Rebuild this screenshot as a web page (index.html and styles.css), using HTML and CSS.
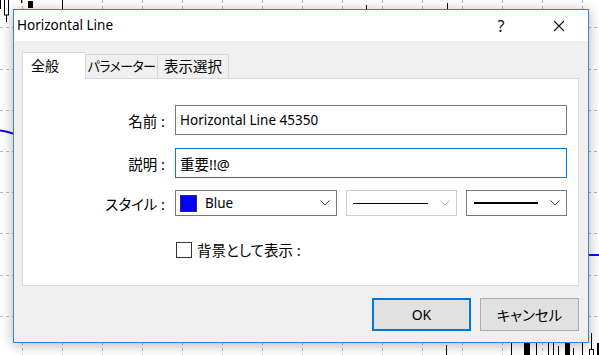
FILE: index.html
```html
<!DOCTYPE html>
<html lang="ja">
<head>
    <meta charset="UTF-8">
    <meta name="viewport" content="width=device-width, initial-scale=1.0">
    <title>Horizontal Line</title>
    <link rel="stylesheet" href="styles.css">
</head>
<body>
    <!-- Chart behind the dialog -->
    <svg class="chart" width="599" height="355" viewBox="0 0 599 355">
        <g stroke="#b8b8b8" stroke-width="1" stroke-dasharray="3 3">
            <line x1="0" y1="27.5" x2="599" y2="27.5"/>
            <line x1="0" y1="69.5" x2="599" y2="69.5"/>
            <line x1="0" y1="110.5" x2="599" y2="110.5"/>
            <line x1="0" y1="151.5" x2="599" y2="151.5"/>
            <line x1="0" y1="192.5" x2="599" y2="192.5"/>
            <line x1="0" y1="233.5" x2="599" y2="233.5"/>
            <line x1="0" y1="275.5" x2="599" y2="275.5"/>
            <line x1="0" y1="316.5" x2="599" y2="316.5"/>
        </g>
        <g stroke="#b8b8b8" stroke-width="1" stroke-dasharray="3 3">
            <line x1="22.5" y1="0" x2="22.5" y2="355"/>
            <line x1="62.5" y1="0" x2="62.5" y2="355"/>
            <line x1="102.5" y1="0" x2="102.5" y2="355"/>
            <line x1="142.5" y1="0" x2="142.5" y2="355"/>
            <line x1="182.5" y1="0" x2="182.5" y2="355"/>
            <line x1="222.5" y1="0" x2="222.5" y2="355"/>
            <line x1="262.5" y1="0" x2="262.5" y2="355"/>
            <line x1="302.5" y1="0" x2="302.5" y2="355"/>
            <line x1="342.5" y1="0" x2="342.5" y2="355"/>
            <line x1="382.5" y1="0" x2="382.5" y2="355"/>
            <line x1="422.5" y1="0" x2="422.5" y2="355"/>
            <line x1="462.5" y1="0" x2="462.5" y2="355"/>
            <line x1="502.5" y1="0" x2="502.5" y2="355"/>
            <line x1="542.5" y1="0" x2="542.5" y2="355"/>
            <line x1="582.5" y1="0" x2="582.5" y2="355"/>
        </g>
        <!-- candles -->
        <g stroke="#000" stroke-width="1" fill="#fff">
            <line x1="0.5" y1="0" x2="0.5" y2="9"/>
            <rect x="4.5" y="-1" width="4" height="16"/>
            <line x1="6.5" y1="15" x2="6.5" y2="22"/>
            <line x1="21.5" y1="0" x2="21.5" y2="3"/>
            <line x1="62.5" y1="0" x2="62.5" y2="9"/>
            <line x1="366.5" y1="5" x2="366.5" y2="9"/>
            <line x1="447.5" y1="3" x2="447.5" y2="9"/>
            <line x1="446.5" y1="345" x2="446.5" y2="355"/>
            <line x1="511.5" y1="343" x2="511.5" y2="355"/>
            <line x1="536.5" y1="343" x2="536.5" y2="355"/>
            <line x1="548.5" y1="343" x2="548.5" y2="355"/>
            <line x1="553.5" y1="343" x2="553.5" y2="355"/>
            <line x1="558.5" y1="346" x2="558.5" y2="355"/>
            <line x1="573.5" y1="348" x2="573.5" y2="355"/>
            <line x1="582.5" y1="343" x2="582.5" y2="355"/>
            <line x1="591.5" y1="333" x2="591.5" y2="349"/>
            <rect x="589.5" y="349.5" width="4" height="6"/>
        </g>
        <g fill="#000">
            <rect x="28" y="1" width="5" height="7"/>
            <rect x="524" y="343" width="6" height="12"/>
            <rect x="565" y="343" width="5" height="12"/>
            <rect x="597" y="343" width="2" height="12"/>
        </g>
        <!-- indicator line -->
        <g stroke="#1010d8" stroke-width="2" fill="none">
            <polyline points="0,130.5 6,131.5 13,133.5"/>
            <polyline points="588,255 599,255"/>
        </g>
    </svg>

    <!-- Dialog -->
    <div class="dialog">
        <div class="titlebar">
            <span class="title latin">Horizontal Line</span>
            <div class="title-buttons">
                <span class="title-btn">?</span>
                <span class="title-btn">
                    <svg width="12" height="12" viewBox="0 0 12 12">
                        <path d="M1 1 L11 11 M11 1 L1 11" stroke="#111" stroke-width="1.1" fill="none"/>
                    </svg>
                </span>
            </div>
        </div>

        <div class="dialog-body">
            <div class="tabs">
                <div class="tab active">全般</div>
                <div class="tab tab-params">パラメーター</div>
                <div class="tab tab-view">表示選択</div>
            </div>

            <div class="panel">
                <label class="label">名前 :</label>
                <div class="input latin">Horizontal Line 45350</div>

                <label class="label">説明 :</label>
                <div class="input focused">重要!!@</div>

                <label class="label row-style">スタイル :</label>
                <div class="style-row row-style">
                    <div class="select color-select">
                        <span class="swatch"></span>
                        <span class="select-text latin">Blue</span>
                        <svg class="chevron" width="10" height="6" viewBox="0 0 10 6">
                            <path d="M0.5 0.5 L5 5 L9.5 0.5" stroke="#444" fill="none"/>
                        </svg>
                    </div>
                    <div class="select line-select disabled">
                        <span class="line-sample thin"></span>
                        <svg class="chevron" width="10" height="6" viewBox="0 0 10 6">
                            <path d="M0.5 0.5 L5 5 L9.5 0.5" stroke="#b5b5b5" fill="none"/>
                        </svg>
                    </div>
                    <div class="select width-select">
                        <span class="line-sample thick"></span>
                        <svg class="chevron" width="10" height="6" viewBox="0 0 10 6">
                            <path d="M0.5 0.5 L5 5 L9.5 0.5" stroke="#444" fill="none"/>
                        </svg>
                    </div>
                </div>

                <div class="check-row">
                    <span class="checkbox"></span>
                    <span>背景として表示 :</span>
                </div>
            </div>

            <div class="buttons">
                <button class="btn default latin">OK</button>
                <button class="btn">キャンセル</button>
            </div>
        </div>
    </div>
</body>
</html>
```

FILE: styles.css
```css
/* Basic Reset */
body {
    margin: 0;
    width: 599px;
    height: 355px;
    overflow: hidden;
    position: relative;
    background-color: #fff;
    font-family: "Noto Sans", "Noto Sans CJK JP", sans-serif;
    font-size: 14.5px;
    color: #000;
    font-feature-settings: "palt";
}

/* Latin-only text runs a little narrower */
.latin {
    font-size: 13.5px;
}

.chart {
    position: absolute;
    left: 0;
    top: 0;
    display: block;
}

/* Dialog window */
.dialog {
    position: absolute;
    left: 13px;
    top: 9px;
    width: 576px;
    height: 334px;
    box-sizing: border-box;
    border: 1px solid #3b80d2;
    background-color: #f0f0f0;
    box-shadow: 0 2px 12px rgba(0, 0, 0, 0.3);
    display: flex;
    flex-direction: column;
}

.titlebar {
    height: 31px;
    background-color: #fff;
    display: flex;
    align-items: center;
    padding-left: 3px;
}

.title {
    line-height: 1;
}

.title-buttons {
    margin-left: auto;
    margin-right: 6px;
    display: flex;
    gap: 12px;
}

.title-btn {
    width: 46px;
    height: 31px;
    display: flex;
    align-items: center;
    justify-content: center;
    font-size: 16px;
    color: #111;
}

.dialog-body {
    flex: 1;
    padding: 11px 9px 11px 8px;
    display: flex;
    flex-direction: column;
}

/* Tabs */
.tabs {
    height: 26px;
    display: flex;
    align-items: flex-end;
    position: relative;
    z-index: 1;
    font-size: 14px;
}

.tab {
    box-sizing: border-box;
    height: 24px;
    display: flex;
    align-items: center;
    justify-content: center;
    white-space: nowrap;
    background-color: #f0f0f0;
    border: 1px solid #d9d9d9;
    border-left: none;
    border-bottom: none;
    line-height: 1;
}

.tab.active {
    width: 63px;
    height: 27px;
    margin-bottom: -1px;
    background-color: #fff;
    border-left: 1px solid #d9d9d9;
    border-right: none;
    justify-content: flex-start;
    padding-left: 8px;
}

.tab-params {
    width: 73px;
    border-left: 1px solid #d9d9d9;
    font-size: 13px;
    letter-spacing: -0.6px;
}

.tab-view {
    width: 71px;
    font-size: 14.5px;
}

/* Panel */
.panel {
    box-sizing: border-box;
    height: 208px;
    background-color: #fff;
    border: 1px solid #d9d9d9;
    padding: 26px 11px 0 0;
    display: grid;
    grid-template-columns: 143px 1fr;
    column-gap: 9px;
    row-gap: 13px;
    align-content: start;
}

.label {
    display: flex;
    align-items: center;
    justify-content: flex-end;
    padding-right: 1px;
}

.input {
    box-sizing: border-box;
    height: 30px;
    border: 1px solid #7a7a7a;
    padding: 0 4px;
    display: flex;
    align-items: center;
}

.input.focused {
    border-color: #0078d7;
}

.row-style {
    margin-top: -1px;
}

.style-row {
    display: flex;
    gap: 9px;
}

.select {
    box-sizing: border-box;
    height: 26px;
    border: 1px solid #7a7a7a;
    background-color: #fff;
    display: flex;
    align-items: center;
    padding: 0 6px 0 4px;
}

.select.disabled {
    border-color: #cccccc;
}

.chevron {
    margin-left: auto;
}

.color-select {
    width: 162px;
}

.swatch {
    width: 15px;
    height: 15px;
    background-color: #0000ff;
    border: 1px solid #333;
}

.select-text {
    margin-left: 8px;
}

.line-select {
    width: 111px;
    padding-left: 6px;
}

.width-select {
    width: 101px;
    padding-left: 7px;
}

.line-sample {
    display: block;
    background-color: #000;
}

.line-sample.thin {
    width: 75px;
    height: 1px;
}

.line-sample.thick {
    width: 64px;
    height: 2px;
}

.check-row {
    grid-column: 2;
    margin-top: 10px;
    display: flex;
    align-items: center;
    gap: 5px;
}

.checkbox {
    box-sizing: border-box;
    width: 16px;
    height: 16px;
    margin-left: 1px;
    border: 1px solid #333;
    background-color: #fff;
}

/* Bottom buttons */
.buttons {
    margin-top: 12px;
    display: flex;
    justify-content: flex-end;
    gap: 9px;
}

.btn {
    box-sizing: border-box;
    width: 99px;
    height: 33px;
    font-family: inherit;
    font-size: 14.5px;
    font-feature-settings: "palt";
    color: #000;
    background-color: #e1e1e1;
    border: 1px solid #adadad;
    border-radius: 0;
    padding: 0;
}

.btn.latin {
    font-size: 14px;
}

.btn.default {
    border: 2px solid #0078d7;
}
```
